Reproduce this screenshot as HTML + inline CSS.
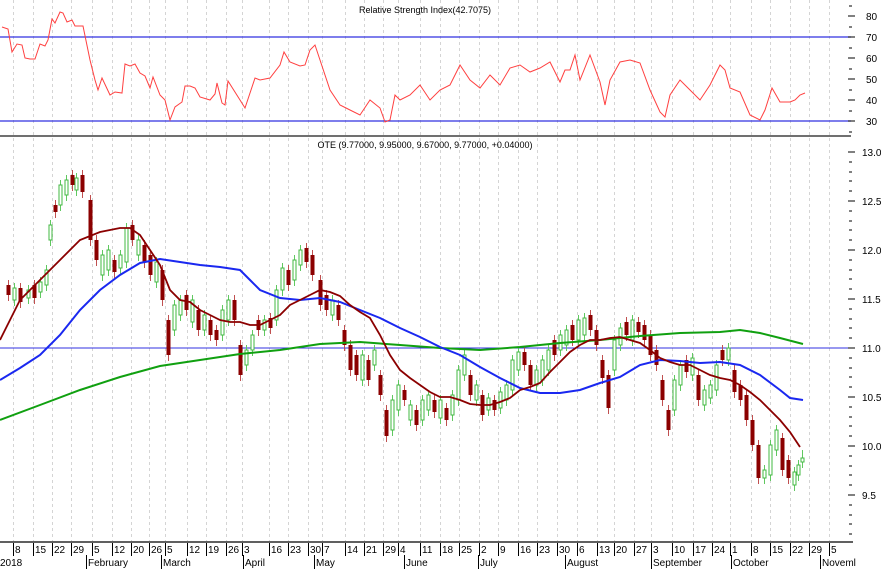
<!DOCTYPE html>
<html><head><meta charset="utf-8"><style>
html,body{margin:0;padding:0;background:#fff;}
svg{display:block;font-family:"Liberation Sans",sans-serif;}
.gr line{stroke:#d4d4d4;stroke-dasharray:3,3}
.g{fill:#fff;stroke:#40b840;stroke-width:1}
.r{fill:#8b0000}
.gw{stroke:#60c860;stroke-width:1}
.rw{stroke:#c05050;stroke-width:1}
.t{font-size:10px;fill:#000}
</style></head><body>
<svg width="881" height="569" xmlns="http://www.w3.org/2000/svg">
<g class="gr">
<line x1="13.5" y1="0" x2="13.5" y2="541"/><line x1="33.5" y1="0" x2="33.5" y2="541"/><line x1="52.5" y1="0" x2="52.5" y2="541"/><line x1="71.5" y1="0" x2="71.5" y2="541"/><line x1="92.5" y1="0" x2="92.5" y2="541"/><line x1="112.5" y1="0" x2="112.5" y2="541"/><line x1="131.5" y1="0" x2="131.5" y2="541"/><line x1="149.5" y1="0" x2="149.5" y2="541"/><line x1="165.5" y1="0" x2="165.5" y2="541"/><line x1="187.5" y1="0" x2="187.5" y2="541"/><line x1="206.5" y1="0" x2="206.5" y2="541"/><line x1="226.5" y1="0" x2="226.5" y2="541"/><line x1="242.5" y1="0" x2="242.5" y2="541"/><line x1="269.5" y1="0" x2="269.5" y2="541"/><line x1="288.5" y1="0" x2="288.5" y2="541"/><line x1="308.5" y1="0" x2="308.5" y2="541"/><line x1="322.5" y1="0" x2="322.5" y2="541"/><line x1="345.5" y1="0" x2="345.5" y2="541"/><line x1="364.5" y1="0" x2="364.5" y2="541"/><line x1="383.5" y1="0" x2="383.5" y2="541"/><line x1="398.5" y1="0" x2="398.5" y2="541"/><line x1="420.5" y1="0" x2="420.5" y2="541"/><line x1="440.5" y1="0" x2="440.5" y2="541"/><line x1="459.5" y1="0" x2="459.5" y2="541"/><line x1="479.5" y1="0" x2="479.5" y2="541"/><line x1="498.5" y1="0" x2="498.5" y2="541"/><line x1="518.5" y1="0" x2="518.5" y2="541"/><line x1="537.5" y1="0" x2="537.5" y2="541"/><line x1="557.5" y1="0" x2="557.5" y2="541"/><line x1="577.5" y1="0" x2="577.5" y2="541"/><line x1="597.5" y1="0" x2="597.5" y2="541"/><line x1="614.5" y1="0" x2="614.5" y2="541"/><line x1="634.5" y1="0" x2="634.5" y2="541"/><line x1="651.5" y1="0" x2="651.5" y2="541"/><line x1="672.5" y1="0" x2="672.5" y2="541"/><line x1="693.5" y1="0" x2="693.5" y2="541"/><line x1="712.5" y1="0" x2="712.5" y2="541"/><line x1="730.5" y1="0" x2="730.5" y2="541"/><line x1="751.5" y1="0" x2="751.5" y2="541"/><line x1="770.5" y1="0" x2="770.5" y2="541"/><line x1="790.5" y1="0" x2="790.5" y2="541"/><line x1="809.5" y1="0" x2="809.5" y2="541"/><line x1="829.5" y1="0" x2="829.5" y2="541"/>
</g>
<line x1="0" y1="37" x2="851" y2="37" stroke="#3030e0" stroke-width="1.3"/>
<line x1="0" y1="121" x2="851" y2="121" stroke="#3030e0" stroke-width="1.3"/>
<line x1="0" y1="136" x2="851" y2="136" stroke="#707070" stroke-width="2"/>
<line x1="0" y1="348" x2="851" y2="348" stroke="#3030e0" stroke-width="1"/>
<text x="425" y="13" font-size="9" text-anchor="middle">Relative Strength Index(42.7075)</text>
<text x="425" y="148" font-size="9" text-anchor="middle">OTE (9.77000, 9.95000, 9.67000, 9.77000, +0.04000)</text>
<polyline fill="none" stroke="#ff4040" stroke-width="1" points="2,27 8,29 12,52 17,44 22,45 25,58 30,59 35,59 40,44 45,46 48,40 52,19 55,23 60,12 63,13 67,22 72,20 75,26 83,26 90,60 95,80 98,90 102,78 110,95 115,92 122,93 125,64 130,66 135,64 140,73 145,76 150,88 153,77 160,95 165,100 170,120 175,107 182,102 185,86 190,86 195,88 200,97 210,100 215,94 217,83 222,103 225,105 228,81 240,100 245,108 255,78 260,80 270,78 280,65 284,52 290,62 300,66 305,65 310,50 315,45 320,60 330,90 340,105 350,110 360,115 370,100 380,108 385,122 390,120 395,95 400,100 410,95 420,85 430,100 440,90 450,85 455,75 460,65 470,80 480,88 490,75 500,85 510,68 520,65 530,72 540,68 550,62 560,82 565,70 570,70 575,55 580,80 590,55 600,82 605,105 610,80 620,62 630,60 640,63 650,90 660,112 665,117 670,95 680,80 690,90 700,100 710,85 720,65 725,70 730,88 740,92 750,115 760,120 765,110 772,88 780,102 790,102 795,100 800,95 805,93"/>
<path class="rw" d="M8.5 280V301M20.5 283V308M34.5 280V304M55.5 200V218M72.5 170V191M82.5 170V198M90.5 195V246M96.5 235V266M114.5 255V278M132.5 220V246M144.5 240V268M150.5 250V281M162.5 265V306M168.5 315V361M186.5 290V316M198.5 305V336M210.5 315V341M216.5 325V346M234.5 295V326M240.5 340V381M258.5 315V336M270.5 313V334M288.5 265V291M306.5 243V268M312.5 250V281M320.5 275V311M326.5 290V316M338.5 300V326M344.5 325V351M350.5 340V376M356.5 350V381M368.5 355V386M380.5 370V401M386.5 405V442M404.5 385V406M416.5 405V431M434.5 395V418M446.5 403V426M470.5 370V401M482.5 390V421M494.5 395V416M524.5 347V371M530.5 360V391M554.5 335V361M572.5 320V346M590.5 310V336M596.5 325V351M602.5 355V384M608.5 370V414M626.5 317V341M638.5 317V338M644.5 320V346M650.5 330V361M656.5 345V371M662.5 375V406M668.5 405V436M686.5 355V378M698.5 370V406M722.5 345V366M734.5 365V398M740.5 380V406M746.5 390V426M752.5 415V451M758.5 440V484M782.5 433V476M788.5 455V484"/>
<path class="gw" d="M14.5 283V306M28.5 285V304M40.5 277V298M46.5 265V291M50.5 220V246M60.5 180V211M66.5 175V201M76.5 173V196M102.5 250V281M108.5 245V276M120.5 250V274M126.5 223V268M138.5 235V261M156.5 257V288M174.5 300V336M180.5 295V321M192.5 295V328M204.5 310V336M222.5 305V341M228.5 295V326M246.5 345V371M252.5 330V356M264.5 315V336M276.5 285V326M282.5 263V296M294.5 255V286M300.5 245V271M332.5 295V321M362.5 350V386M374.5 345V371M392.5 395V436M398.5 380V416M410.5 400V426M422.5 395V426M428.5 390V416M440.5 395V424M452.5 390V421M458.5 365V406M464.5 350V381M476.5 380V406M488.5 393V416M500.5 387V414M506.5 380V406M512.5 355V396M518.5 347V376M536.5 365V391M542.5 355V386M548.5 345V376M560.5 330V356M566.5 325V351M578.5 315V346M584.5 313V341M614.5 335V376M620.5 323V351M632.5 315V346M674.5 375V416M680.5 360V391M692.5 353V381M704.5 385V411M710.5 380V404M716.5 360V396M728.5 343V366M764.5 465V484M770.5 440V481M776.5 425V456M794.5 467V491M798.5 460V481M802.5 450V468"/>
<rect class="r" x="6.5" y="285" width="4" height="10"/><rect class="r" x="18.5" y="288" width="4" height="14"/><rect class="r" x="32.5" y="285" width="4" height="13"/><rect class="r" x="53.5" y="205" width="4" height="7"/><rect class="r" x="70.5" y="175" width="4" height="10"/><rect class="r" x="80.5" y="175" width="4" height="17"/><rect class="r" x="88.5" y="200" width="4" height="40"/><rect class="r" x="94.5" y="240" width="4" height="20"/><rect class="r" x="112.5" y="260" width="4" height="12"/><rect class="r" x="130.5" y="225" width="4" height="15"/><rect class="r" x="142.5" y="245" width="4" height="17"/><rect class="r" x="148.5" y="255" width="4" height="20"/><rect class="r" x="160.5" y="270" width="4" height="30"/><rect class="r" x="166.5" y="320" width="4" height="35"/><rect class="r" x="184.5" y="295" width="4" height="15"/><rect class="r" x="196.5" y="310" width="4" height="20"/><rect class="r" x="208.5" y="320" width="4" height="15"/><rect class="r" x="214.5" y="330" width="4" height="10"/><rect class="r" x="232.5" y="300" width="4" height="20"/><rect class="r" x="238.5" y="345" width="4" height="30"/><rect class="r" x="256.5" y="320" width="4" height="10"/><rect class="r" x="268.5" y="318" width="4" height="10"/><rect class="r" x="286.5" y="270" width="4" height="15"/><rect class="r" x="304.5" y="248" width="4" height="14"/><rect class="r" x="310.5" y="255" width="4" height="20"/><rect class="r" x="318.5" y="280" width="4" height="25"/><rect class="r" x="324.5" y="295" width="4" height="15"/><rect class="r" x="336.5" y="305" width="4" height="15"/><rect class="r" x="342.5" y="330" width="4" height="15"/><rect class="r" x="348.5" y="345" width="4" height="25"/><rect class="r" x="354.5" y="355" width="4" height="20"/><rect class="r" x="366.5" y="360" width="4" height="20"/><rect class="r" x="378.5" y="375" width="4" height="20"/><rect class="r" x="384.5" y="410" width="4" height="26"/><rect class="r" x="402.5" y="390" width="4" height="10"/><rect class="r" x="414.5" y="410" width="4" height="15"/><rect class="r" x="432.5" y="400" width="4" height="12"/><rect class="r" x="444.5" y="408" width="4" height="12"/><rect class="r" x="468.5" y="375" width="4" height="20"/><rect class="r" x="480.5" y="395" width="4" height="20"/><rect class="r" x="492.5" y="400" width="4" height="10"/><rect class="r" x="522.5" y="352" width="4" height="13"/><rect class="r" x="528.5" y="365" width="4" height="20"/><rect class="r" x="552.5" y="340" width="4" height="15"/><rect class="r" x="570.5" y="325" width="4" height="15"/><rect class="r" x="588.5" y="315" width="4" height="15"/><rect class="r" x="594.5" y="330" width="4" height="15"/><rect class="r" x="600.5" y="360" width="4" height="18"/><rect class="r" x="606.5" y="375" width="4" height="33"/><rect class="r" x="624.5" y="322" width="4" height="13"/><rect class="r" x="636.5" y="322" width="4" height="10"/><rect class="r" x="642.5" y="325" width="4" height="15"/><rect class="r" x="648.5" y="335" width="4" height="20"/><rect class="r" x="654.5" y="350" width="4" height="15"/><rect class="r" x="660.5" y="380" width="4" height="20"/><rect class="r" x="666.5" y="410" width="4" height="20"/><rect class="r" x="684.5" y="360" width="4" height="12"/><rect class="r" x="696.5" y="375" width="4" height="25"/><rect class="r" x="720.5" y="350" width="4" height="10"/><rect class="r" x="732.5" y="370" width="4" height="22"/><rect class="r" x="738.5" y="385" width="4" height="15"/><rect class="r" x="744.5" y="395" width="4" height="25"/><rect class="r" x="750.5" y="420" width="4" height="25"/><rect class="r" x="756.5" y="445" width="4" height="33"/><rect class="r" x="780.5" y="438" width="4" height="32"/><rect class="r" x="786.5" y="460" width="4" height="18"/>
<rect class="g" x="13" y="288" width="3" height="12"/><rect class="g" x="27" y="290" width="3" height="8"/><rect class="g" x="39" y="282" width="3" height="10"/><rect class="g" x="45" y="270" width="3" height="15"/><rect class="g" x="49" y="225" width="3" height="15"/><rect class="g" x="59" y="185" width="3" height="20"/><rect class="g" x="65" y="180" width="3" height="15"/><rect class="g" x="75" y="178" width="3" height="12"/><rect class="g" x="101" y="255" width="3" height="20"/><rect class="g" x="107" y="250" width="3" height="20"/><rect class="g" x="119" y="255" width="3" height="13"/><rect class="g" x="125" y="228" width="3" height="34"/><rect class="g" x="137" y="240" width="3" height="15"/><rect class="g" x="155" y="262" width="3" height="20"/><rect class="g" x="173" y="305" width="3" height="25"/><rect class="g" x="179" y="300" width="3" height="15"/><rect class="g" x="191" y="300" width="3" height="22"/><rect class="g" x="203" y="315" width="3" height="15"/><rect class="g" x="221" y="310" width="3" height="25"/><rect class="g" x="227" y="300" width="3" height="20"/><rect class="g" x="245" y="350" width="3" height="15"/><rect class="g" x="251" y="335" width="3" height="15"/><rect class="g" x="263" y="320" width="3" height="10"/><rect class="g" x="275" y="290" width="3" height="30"/><rect class="g" x="281" y="268" width="3" height="22"/><rect class="g" x="293" y="260" width="3" height="20"/><rect class="g" x="299" y="250" width="3" height="15"/><rect class="g" x="331" y="300" width="3" height="15"/><rect class="g" x="361" y="355" width="3" height="25"/><rect class="g" x="373" y="350" width="3" height="15"/><rect class="g" x="391" y="400" width="3" height="30"/><rect class="g" x="397" y="385" width="3" height="25"/><rect class="g" x="409" y="405" width="3" height="15"/><rect class="g" x="421" y="400" width="3" height="20"/><rect class="g" x="427" y="395" width="3" height="15"/><rect class="g" x="439" y="400" width="3" height="18"/><rect class="g" x="451" y="395" width="3" height="20"/><rect class="g" x="457" y="370" width="3" height="30"/><rect class="g" x="463" y="355" width="3" height="20"/><rect class="g" x="475" y="385" width="3" height="15"/><rect class="g" x="487" y="398" width="3" height="12"/><rect class="g" x="499" y="392" width="3" height="16"/><rect class="g" x="505" y="385" width="3" height="15"/><rect class="g" x="511" y="360" width="3" height="30"/><rect class="g" x="517" y="352" width="3" height="18"/><rect class="g" x="535" y="370" width="3" height="15"/><rect class="g" x="541" y="360" width="3" height="20"/><rect class="g" x="547" y="350" width="3" height="20"/><rect class="g" x="559" y="335" width="3" height="15"/><rect class="g" x="565" y="330" width="3" height="15"/><rect class="g" x="577" y="320" width="3" height="20"/><rect class="g" x="583" y="318" width="3" height="17"/><rect class="g" x="613" y="340" width="3" height="30"/><rect class="g" x="619" y="328" width="3" height="17"/><rect class="g" x="631" y="320" width="3" height="20"/><rect class="g" x="673" y="380" width="3" height="30"/><rect class="g" x="679" y="365" width="3" height="20"/><rect class="g" x="691" y="358" width="3" height="17"/><rect class="g" x="703" y="390" width="3" height="15"/><rect class="g" x="709" y="385" width="3" height="13"/><rect class="g" x="715" y="365" width="3" height="25"/><rect class="g" x="727" y="348" width="3" height="12"/><rect class="g" x="763" y="470" width="3" height="8"/><rect class="g" x="769" y="445" width="3" height="30"/><rect class="g" x="775" y="430" width="3" height="20"/><rect class="g" x="793" y="472" width="3" height="13"/><rect class="g" x="797" y="465" width="3" height="10"/><rect class="g" x="801" y="458" width="3" height="4"/>
<polyline fill="none" stroke="#10a010" stroke-width="2" points="0,420 40,405 80,390 120,377 160,366 200,360 240,354 280,350 320,344 360,342 400,345 440,348 480,350 520,347 560,343 600,340 640,336 680,333 720,332 740,330 760,333 780,338 803,344"/>
<polyline fill="none" stroke="#1a28f0" stroke-width="2" points="0,380 20,368 40,355 60,335 80,310 100,290 120,275 140,263 160,259 180,262 200,265 220,267 240,270 250,280 260,290 280,298 300,300 320,298 330,300 340,302 360,310 380,318 400,328 420,337 440,347 460,355 480,367 500,378 520,388 540,393 560,393 580,390 600,383 620,377 640,365 660,360 680,361 700,363 720,362 740,365 760,375 780,390 790,398 803,400"/>
<polyline fill="none" stroke="#8b0000" stroke-width="1.8" points="0,340 20,300 40,280 60,260 80,240 100,232 120,228 130,228 140,235 150,250 160,265 170,290 180,300 190,302 200,310 210,315 220,320 230,322 240,322 250,325 260,325 270,320 280,315 290,305 300,300 310,295 320,290 330,292 340,296 350,305 360,312 370,318 380,335 390,355 400,370 410,378 420,385 430,392 440,397 450,397 460,400 470,404 480,405 490,405 500,402 510,398 520,390 530,387 540,383 550,372 560,362 570,352 580,345 590,340 600,340 610,338 620,337 630,340 640,343 650,350 660,358 670,362 680,365 690,365 700,370 710,375 720,378 730,380 740,385 750,392 760,400 770,410 780,420 790,432 800,447"/>
<rect x="852" y="0" width="29" height="569" fill="#fff"/>
<path stroke="#000" d="M849 6h3M849 27h3M849 48h3M849 69h3M849 90h3M849 111h3M849 132h3M849 162h3M849 172h3M849 181h3M849 191h3M849 211h3M849 221h3M849 230h3M849 240h3M849 260h3M849 270h3M849 279h3M849 289h3M849 309h3M849 319h3M849 328h3M849 338h3M849 358h3M849 368h3M849 377h3M849 387h3M849 407h3M849 417h3M849 426h3M849 436h3M849 456h3M849 466h3M849 475h3M849 485h3M849 505h3M849 515h3M849 524h3M849 534h3M848 16h7M848 37h7M848 58h7M848 79h7M848 100h7M848 121h7M848 152h7M848 201h7M848 250h7M848 299h7M848 348h7M848 397h7M848 446h7M848 495h7"/>
<g class="t">
<text x="866" y="20">80</text><text x="866" y="41">70</text><text x="866" y="62">60</text><text x="866" y="83">50</text><text x="866" y="104">40</text><text x="866" y="125">30</text>
<text x="862" y="156">13.0</text><text x="862" y="205">12.5</text><text x="862" y="254">12.0</text><text x="862" y="303">11.5</text><text x="862" y="352">11.0</text><text x="862" y="401">10.5</text><text x="862" y="450">10.0</text><text x="862" y="499">9.5</text>
</g>
<rect x="0" y="541" width="881" height="28" fill="#fff"/>
<line x1="0" y1="542" x2="853" y2="542" stroke="#606060" stroke-width="2"/>
<path stroke="#000" d="M13.5 543V556M33.5 543V556M52.5 543V556M71.5 543V556M92.5 543V556M112.5 543V556M131.5 543V556M149.5 543V556M165.5 543V556M187.5 543V556M206.5 543V556M226.5 543V556M242.5 543V556M269.5 543V556M288.5 543V556M308.5 543V556M322.5 543V556M345.5 543V556M364.5 543V556M383.5 543V556M398.5 543V556M420.5 543V556M440.5 543V556M459.5 543V556M479.5 543V556M498.5 543V556M518.5 543V556M537.5 543V556M557.5 543V556M577.5 543V556M597.5 543V556M614.5 543V556M634.5 543V556M651.5 543V556M672.5 543V556M693.5 543V556M712.5 543V556M730.5 543V556M751.5 543V556M770.5 543V556M790.5 543V556M809.5 543V556M829.5 543V556M86.5 555V569M161.5 555V569M243.5 555V569M314.5 555V569M404.5 555V569M478.5 555V569M565.5 555V569M651.5 555V569M731.5 555V569M820.5 555V569"/>
<g class="t">
<text x="15" y="553">8</text><text x="35" y="553">15</text><text x="54" y="553">22</text><text x="73" y="553">29</text><text x="94" y="553">5</text><text x="114" y="553">12</text><text x="133" y="553">20</text><text x="151" y="553">26</text><text x="167" y="553">5</text><text x="189" y="553">12</text><text x="208" y="553">19</text><text x="228" y="553">26</text><text x="244" y="553">3</text><text x="271" y="553">16</text><text x="290" y="553">23</text><text x="310" y="553">30</text><text x="324" y="553">7</text><text x="347" y="553">14</text><text x="366" y="553">21</text><text x="385" y="553">29</text><text x="400" y="553">4</text><text x="422" y="553">11</text><text x="442" y="553">18</text><text x="461" y="553">25</text><text x="481" y="553">2</text><text x="500" y="553">9</text><text x="520" y="553">16</text><text x="539" y="553">23</text><text x="559" y="553">30</text><text x="579" y="553">6</text><text x="599" y="553">13</text><text x="616" y="553">20</text><text x="636" y="553">27</text><text x="653" y="553">3</text><text x="674" y="553">10</text><text x="695" y="553">17</text><text x="714" y="553">24</text><text x="732" y="553">1</text><text x="753" y="553">8</text><text x="772" y="553">15</text><text x="792" y="553">22</text><text x="811" y="553">29</text><text x="831" y="553">5</text>
<text x="0" y="566">2018</text><text x="88" y="566">February</text><text x="163" y="566">March</text><text x="245" y="566">April</text><text x="316" y="566">May</text><text x="406" y="566">June</text><text x="480" y="566">July</text><text x="567" y="566">August</text><text x="653" y="566">September</text><text x="733" y="566">October</text><text x="822" y="566">Noveml</text>
</g>
</svg>
</body></html>
